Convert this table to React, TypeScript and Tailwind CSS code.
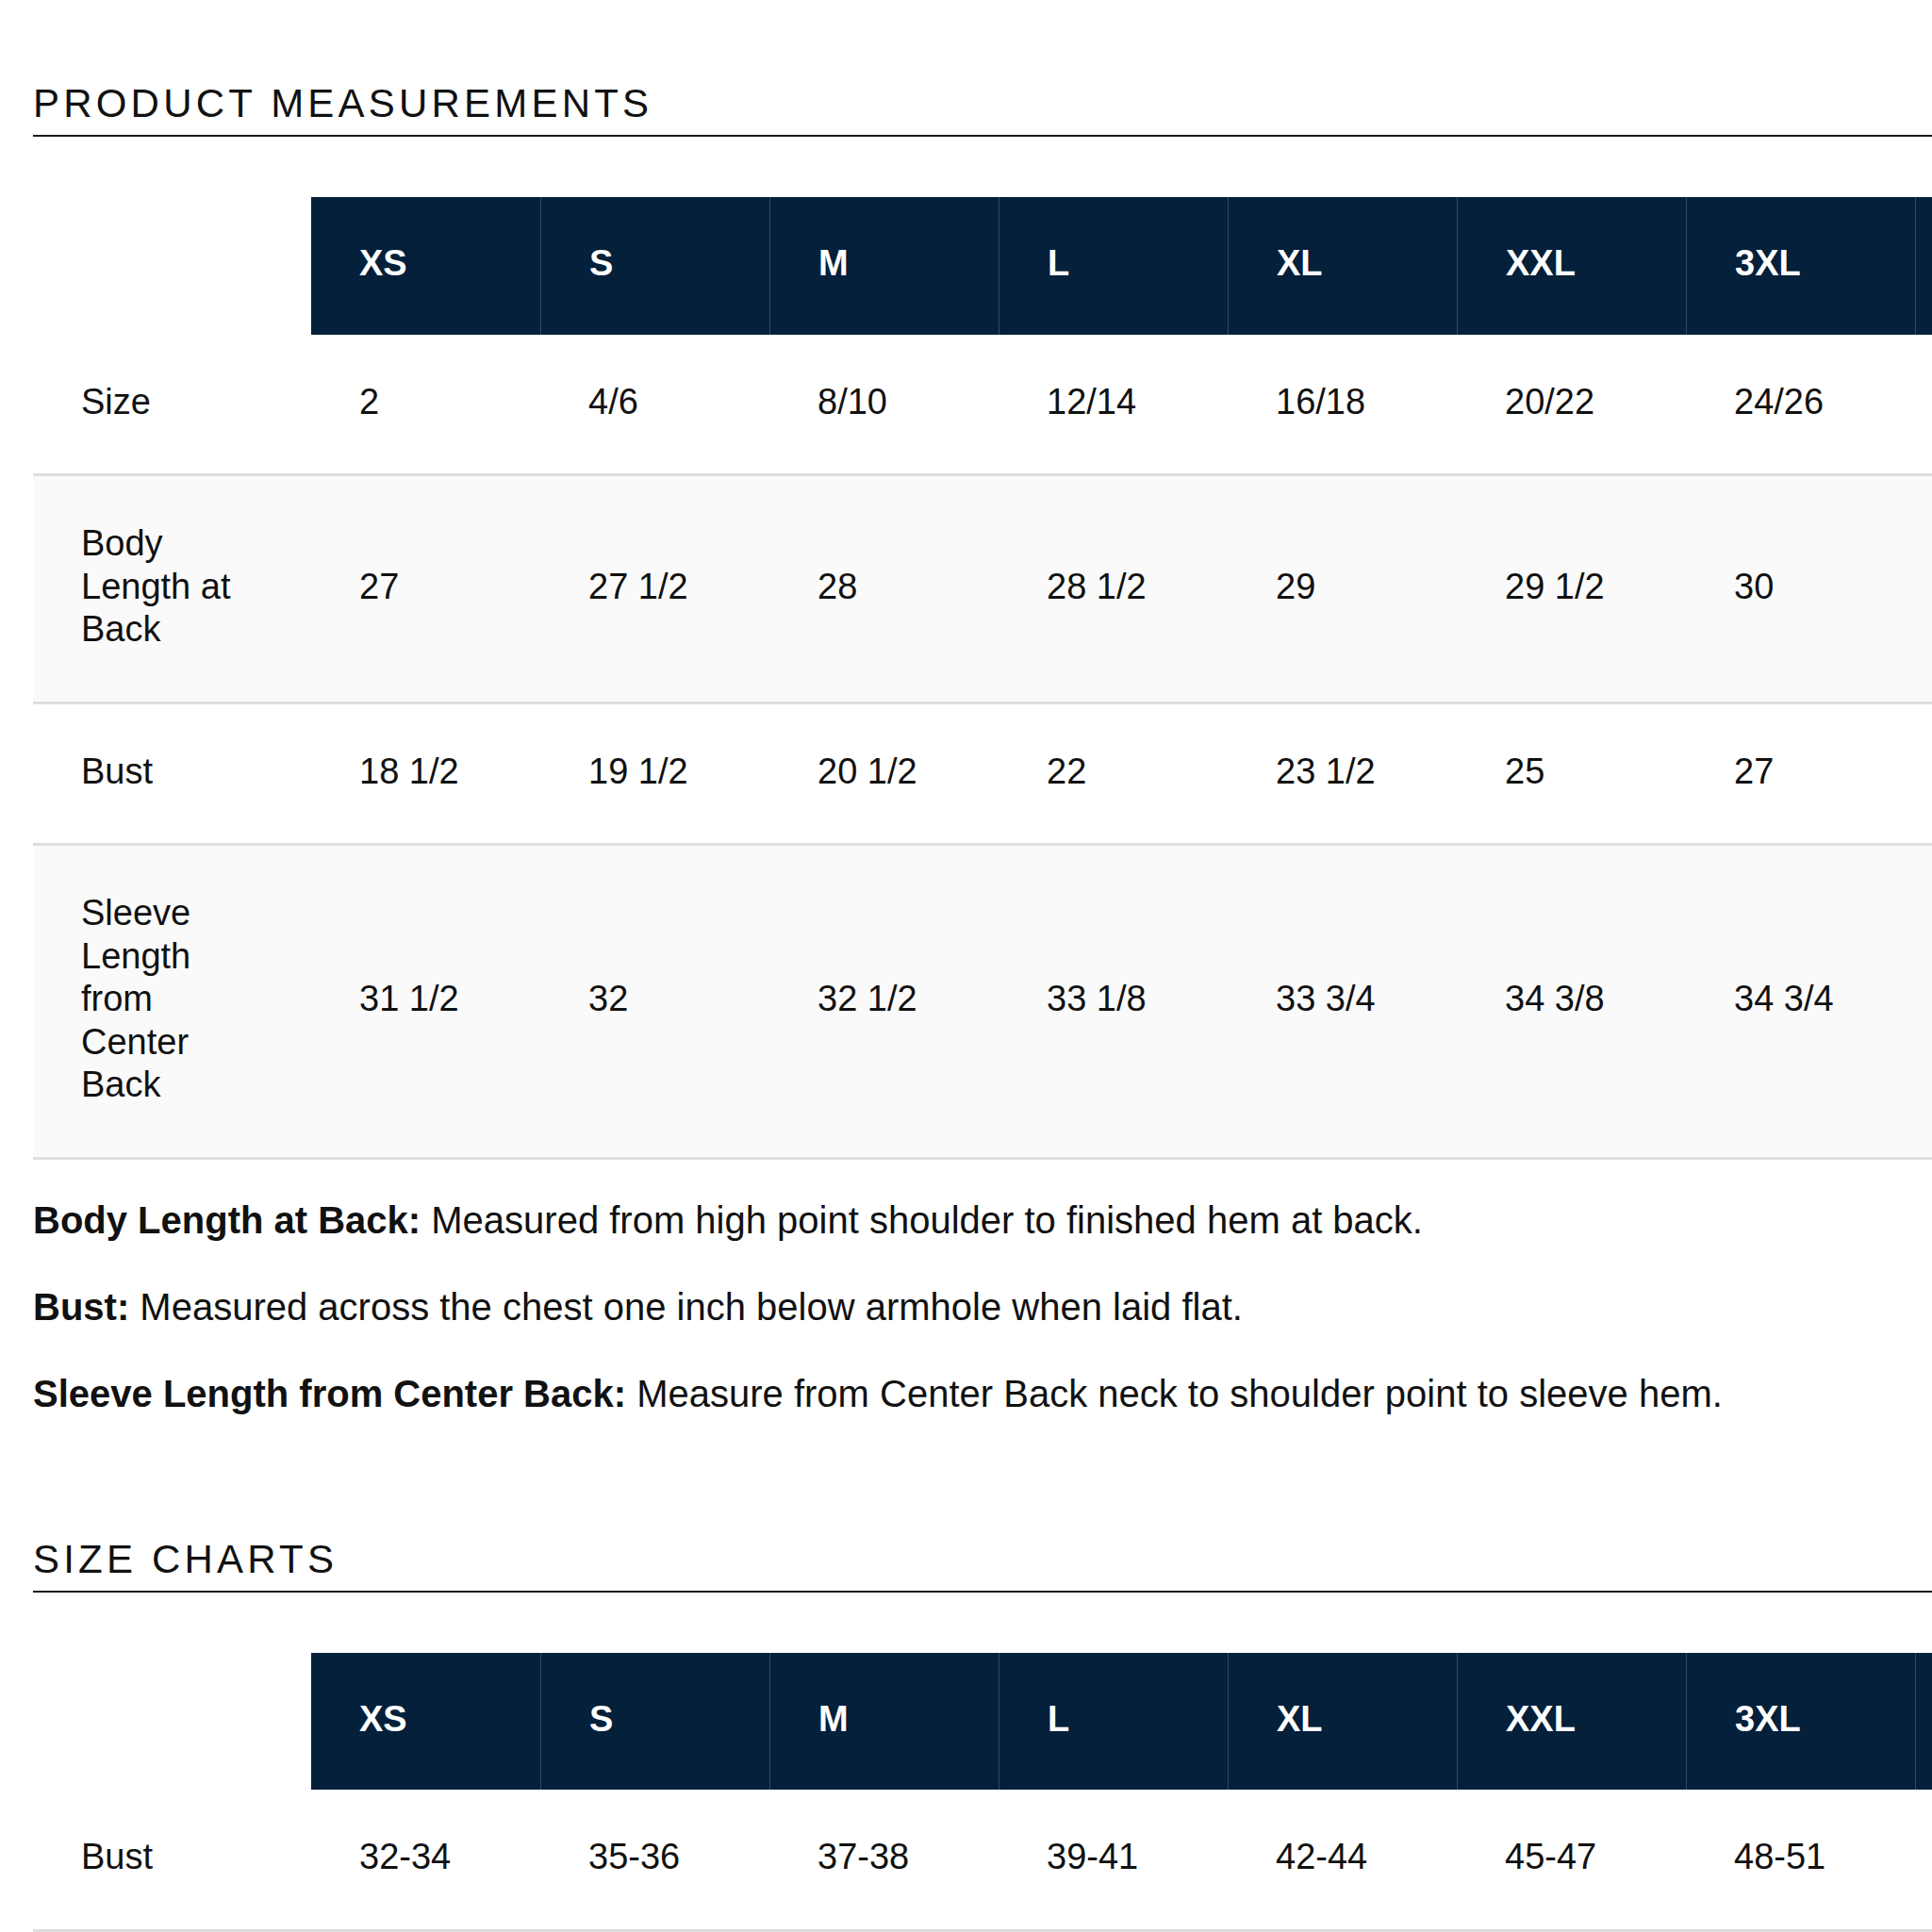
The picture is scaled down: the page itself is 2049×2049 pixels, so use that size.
import React from "react";

const SIZES = ["XS", "S", "M", "L", "XL", "XXL", "3XL", ""];

type Row = { label: string; values: string[] };

const measurements: Row[] = [
  { label: "Size", values: ["2", "4/6", "8/10", "12/14", "16/18", "20/22", "24/26", ""] },
  { label: "Body Length at Back", values: ["27", "27 1/2", "28", "28 1/2", "29", "29 1/2", "30", ""] },
  { label: "Bust", values: ["18 1/2", "19 1/2", "20 1/2", "22", "23 1/2", "25", "27", ""] },
  { label: "Sleeve Length from Center Back", values: ["31 1/2", "32", "32 1/2", "33 1/8", "33 3/4", "34 3/8", "34 3/4", ""] },
];

const sizeChart: Row[] = [
  { label: "Bust", values: ["32-34", "35-36", "37-38", "39-41", "42-44", "45-47", "48-51", ""] },
];

function HeaderRow() {
  return (
    <div className="grid grid-cols-[295px_repeat(8,243px)]">
      <div className="bg-white" />
      {SIZES.map((s, i) => (
        <div
          key={i}
          className={
            i === 0
              ? "bg-[#04203a] pl-[51px] pr-[52px] pt-[48px] pb-[52px] text-[38px] leading-[45.5px] font-bold text-white"
              : "bg-[#04203a] border-l border-[#34495e] pl-[51px] pr-[52px] pt-[48px] pb-[52px] text-[38px] leading-[45.5px] font-bold text-white"
          }
        >
          {s || "\u00a0"}
        </div>
      ))}
    </div>
  );
}

function BodyRow({ row, shaded }: { row: Row; shaded: boolean }) {
  return (
    <div
      className={
        shaded
          ? "grid grid-cols-[295px_repeat(8,243px)] items-center bg-[#fafafa] border-b-[3px] border-[#dedede]"
          : "grid grid-cols-[295px_repeat(8,243px)] items-center bg-white border-b-[3px] border-[#dedede]"
      }
    >
      <div className="pl-[51px] pr-[53px] pt-[49px] pb-[53px] text-[38px] leading-[45.5px] text-[#111]">{row.label}</div>
      {row.values.map((v, i) => (
        <div key={i} className="pl-[51px] pr-[52px] pt-[49px] pb-[53px] text-[38px] leading-[45.5px] text-[#111] whitespace-nowrap">
          {v || "\u00a0"}
        </div>
      ))}
    </div>
  );
}

function Table({ rows }: { rows: Row[] }) {
  return (
    <div className="flex flex-col">
      <HeaderRow />
      {rows.map((r, i) => (
        <BodyRow key={r.label + i} row={r} shaded={i % 2 === 1} />
      ))}
    </div>
  );
}

export default function App() {
  return (
    <div
      className="w-screen h-screen overflow-hidden bg-white pl-[35px] text-[#111]"
      style={{ fontFamily: '"Liberation Sans", Arial, Helvetica, sans-serif' }}
    >
      <div className="w-[2400px]">
        <h2 className="pt-[86px] pb-[9px] border-b-2 border-[#1a1a1a] text-[42px] leading-[48px] tracking-[4.2px] font-normal text-[#111]">
          PRODUCT MEASUREMENTS
        </h2>
        <div className="mt-[64px]">
          <Table rows={measurements} />
        </div>
        <div className="mt-[40px] flex flex-col gap-[44px] text-[40px] leading-[48px] text-[#111]">
          <p>
            <span className="font-bold">Body Length at Back:</span> Measured from high point shoulder to finished hem at back.
          </p>
          <p>
            <span className="font-bold">Bust:</span> Measured across the chest one inch below armhole when laid flat.
          </p>
          <p>
            <span className="font-bold">Sleeve Length from Center Back:</span> Measure from Center Back neck to shoulder point to sleeve hem.
          </p>
        </div>
        <h2 className="mt-[128px] pb-[9px] border-b-2 border-[#1a1a1a] text-[42px] leading-[48px] tracking-[4.2px] font-normal text-[#111]">
          SIZE CHARTS
        </h2>
        <div className="mt-[64px]">
          <Table rows={sizeChart} />
        </div>
      </div>
    </div>
  );
}
